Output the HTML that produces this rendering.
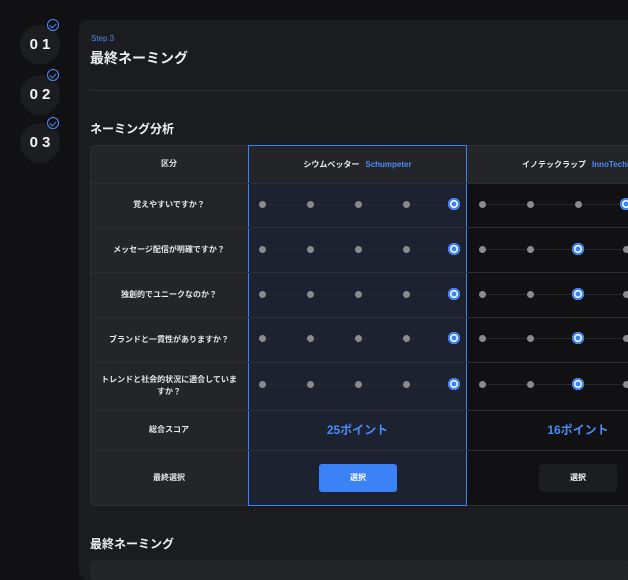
<!DOCTYPE html><html><head><meta charset="utf-8"><style>
*{margin:0;padding:0;box-sizing:border-box}
body{width:628px;height:570px;overflow:hidden;background:#111114;font-family:"Liberation Sans","Noto Sans CJK JP",sans-serif;color:#eee;position:relative}
.a{position:absolute}
.step{width:40px;height:40px;border-radius:50%;background:#1c1d20;left:20px;color:#f2f2f2;font-weight:bold;font-size:15px;letter-spacing:4px;text-indent:4px;text-align:center;line-height:40px}
.chk{position:absolute;left:27px;top:-6px;width:12px;height:12px;border:1.3px solid #4a8cf7;border-radius:50%;text-indent:0}
.chk:after{content:"";position:absolute;left:3px;top:1.5px;width:3px;height:5px;border:solid #4a8cf7;border-width:0 1.3px 1.3px 0;transform:rotate(45deg)}
.lbl{position:absolute;left:90px;width:158px;text-align:center;font-size:8px;font-weight:bold;color:#e8e8e8;line-height:12px;display:flex;align-items:center;justify-content:center;padding:0 10px}
.hl{position:absolute;height:1px;left:90px;width:538px;background:#2e2f33}
.dot{position:absolute;width:7px;height:7px;border-radius:50%;background:#8a8b8f;margin:-3.5px 0 0 -3.5px}
.sel{position:absolute;width:12px;height:12px;border-radius:50%;background:#3b82f6;margin:-6px 0 0 -6px;box-shadow:inset 0 0 0 2px #3b82f6,inset 0 0 0 3.5px #fff}
.ln{position:absolute;height:1px;background:#252830}
</style></head><body>
<div class="a" style="left:79px;top:20px;width:560px;height:560px;background:#1b1c1f;border-radius:8px"></div>
<div class="step a" style="top:25px">01<div class="chk"></div></div>
<div class="step a" style="top:75px">02<div class="chk"></div></div>
<div class="step a" style="top:123px">03<div class="chk"></div></div>
<div class="a" style="left:91px;top:34px;font-size:8px;color:#4a8cf7">Step 3</div>
<div class="a" style="left:90px;top:48px;font-size:14px;font-weight:bold">最終ネーミング</div>
<div class="a" style="left:90px;top:90px;width:540px;height:1px;background:#2c2d30"></div>
<div class="a" style="left:90px;top:120px;font-size:12px;font-weight:bold">ネーミング分析</div>
<div class="a" style="left:90px;top:145px;width:560px;height:361px;background:#242529;border-radius:6px;border:1px solid #2e2f33"></div>
<div class="a" style="left:467px;top:183px;width:170px;height:322px;background:#111114"></div>
<div class="a" style="left:248px;top:145px;width:219px;height:361px;border:1px solid #3b82f6;background:#1c2230"></div>
<div class="a" style="left:249px;top:146px;width:217px;height:37px;background:#242529"></div>
<div class="hl" style="top:183px"></div><div class="hl" style="top:227px"></div><div class="hl" style="top:272px"></div><div class="hl" style="top:317px"></div><div class="hl" style="top:362px"></div><div class="hl" style="top:410px"></div><div class="hl" style="top:450px"></div>
<div class="lbl" style="top:145px;height:38px">区分</div>
<div class="a" style="left:249px;top:145px;width:217px;height:38px;display:flex;align-items:center;justify-content:center;font-size:8px;font-weight:bold">シウムペッター<span style="color:#4a8cf7;margin-left:6px">Schumpeter</span></div>
<div class="a" style="left:522px;top:145px;width:200px;height:38px;display:flex;align-items:center;font-size:8px;font-weight:bold;white-space:nowrap">イノテックラップ<span style="color:#4a8cf7;margin-left:6px">InnoTechLab</span></div>
<div class="lbl" style="top:183px;height:44px">覚えやすいですか？</div>
<div class="lbl" style="top:227px;height:45px">メッセージ配信が明確ですか？</div>
<div class="lbl" style="top:272px;height:45px">独創的でユニークなのか？</div>
<div class="lbl" style="top:317px;height:45px">ブランドと一貫性がありますか？</div>
<div class="lbl" style="top:362px;height:48px">トレンドと社会的状況に適合していますか？</div>
<div class="lbl" style="top:410px;height:40px">総合スコア</div>
<div class="lbl" style="top:450px;height:56px">最終選択</div>
<div id="dots"></div>
<div class="a" style="left:249px;top:410px;width:217px;height:40px;line-height:40px;text-align:center;color:#4a8cf7;font-size:12px;font-weight:bold">25ポイント</div>
<div class="a" style="left:520px;top:410px;width:116px;height:40px;line-height:40px;text-align:center;color:#4a8cf7;font-size:12px;font-weight:bold">16ポイント</div>
<div class="a" style="left:319px;top:464px;width:78px;height:28px;border-radius:3px;background:#3b82f6;color:#fff;font-size:8px;text-align:center;line-height:28px;font-weight:bold">選択</div>
<div class="a" style="left:539px;top:464px;width:78px;height:28px;border-radius:3px;background:#1c1d20;color:#fff;font-size:8px;text-align:center;line-height:28px;font-weight:bold">選択</div>
<div class="a" style="left:90px;top:535px;font-size:12px;font-weight:bold">最終ネーミング</div>
<div class="a" style="left:90px;top:560px;width:540px;height:20px;background:#242529;border-radius:5px"></div>
<script>
var ys=[204,249,294,338,384],c1=[262,310,358,406,454],c2=[482,530,578,626,674],s2=[3,2,2,2,2],h="";
ys.forEach(function(y,i){
h+='<div class="ln" style="left:262px;width:192px;top:'+y+'px"></div><div class="ln" style="left:482px;width:160px;top:'+y+'px"></div>';
c1.forEach(function(x,j){h+='<div class="'+(j==4?'sel':'dot')+'" style="left:'+x+'px;top:'+y+'px"></div>';});
c2.forEach(function(x,j){h+='<div class="'+(j==s2[i]?'sel':'dot')+'" style="left:'+x+'px;top:'+y+'px"></div>';});
});
document.getElementById('dots').innerHTML=h;
</script>
</body></html>
